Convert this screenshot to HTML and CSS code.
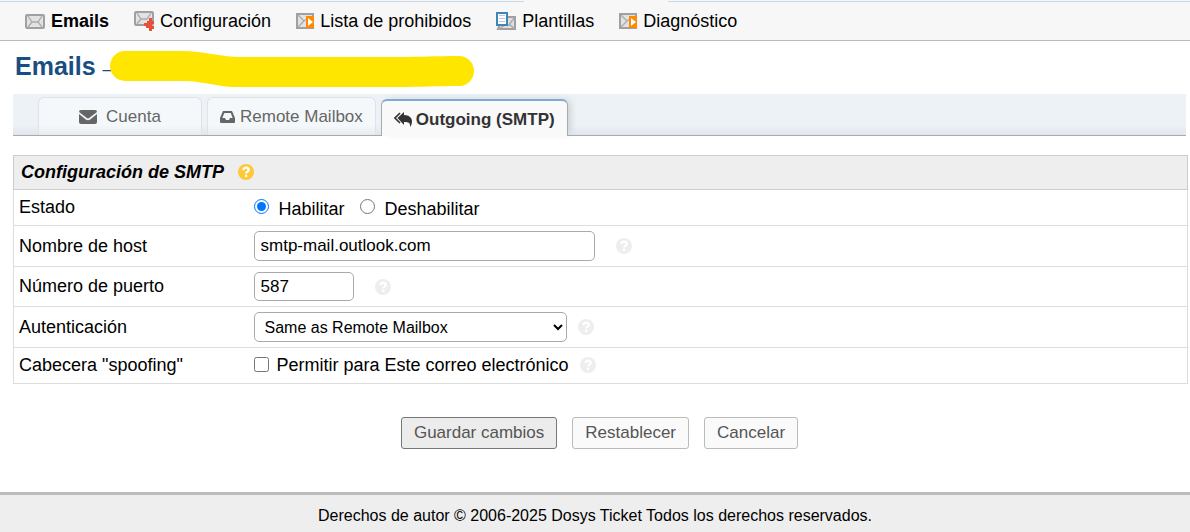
FILE: index.html
```html
<!DOCTYPE html>
<html lang="es">

<head>
    <meta charset="UTF-8">
    <meta name="viewport" content="width=device-width, initial-scale=1.0">
    <title>Emails</title>
    <link rel="stylesheet" href="styles.css">
</head>

<body>
    <!-- shared icons -->
    <svg class="sprite" aria-hidden="true">
        <symbol id="mail" viewBox="0 0 20 15">
            <rect x="1" y="1" width="18" height="13" rx="1" fill="#e2e2e2" stroke="#a0a0a0" stroke-width="2" />
            <path d="M3 2l4 6h6l4-6M3 13l4-5M17 13l-4-5" fill="none" stroke="#aaa" stroke-width="1.300" />
        </symbol>
        <symbol id="mail-go" viewBox="0 0 18 16">
            <rect x="1" y="1" width="16" height="14" fill="#e2e2e2" stroke="#a0a0a0" stroke-width="2" />
            <path d="M2 2l6 6 3-2M2 14l6-6" fill="none" stroke="#aaa" stroke-width="1.300" />
            <path d="M10 3h8v12h-8z" fill="#ff8a00" />
            <path d="M12 5l5 4-5 4z" fill="#fff" />
        </symbol>
        <symbol id="help" viewBox="0 0 16 16">
            <circle cx="8" cy="8" r="8" fill="currentColor" />
            <path d="M5.5 6.2C5.6 2.8 10.700 3 10.700 5.900C10.700 7.700 8.100 7.500 8.100 9.600" fill="none" stroke="#fff" stroke-width="2.300" />
            <path d="M7 10.700h2.300v2.300H7z" fill="#fff" />
        </symbol>
    </svg>

    <nav>
        <div class="topline"><span></span></div>
        <ul class="subnav">
            <li><a class="active" href="#"><svg width="20" height="15"><use href="#mail" /></svg>Emails</a></li>
            <li><a href="#"><svg width="20" height="20" viewBox="0 0 20 20">
                        <rect x="1" y="1" width="18" height="13" rx="1" fill="#e2e2e2" stroke="#a0a0a0" stroke-width="2" />
                        <path d="M3 2l4 6h6l4-6M3 13l4-5" fill="none" stroke="#aaa" stroke-width="1.300" />
                        <path d="M15 7h3v3h2v3h-2v2h2v3h-2v2h-3v-3h-3v-2h-2v-3h3v-2h2z" fill="#e8503c" />
                    </svg>Configuración</a></li>
            <li><a href="#"><svg width="18" height="16"><use href="#mail-go" /></svg>Lista de prohibidos</a></li>
            <li><a href="#"><svg width="20" height="18" viewBox="0 0 20 18">
                        <path d="M10 5h9v12H2l2-5z" fill="#dedede" stroke="#a0a0a0" stroke-width="2" />
                        <path d="M3 17l6-4h5l5 4M13 13l5-7" fill="none" stroke="#aaa" stroke-width="1.300" />
                        <path d="M1 1h10v12H1z" fill="#fff" stroke="#3d86bb" stroke-width="2" />
                        <path d="M3 3.500h6M3 6.500h6M3 9.500h6" stroke="#c3c9ce" />
                    </svg>Plantillas</a></li>
            <li><a href="#"><svg width="18" height="16"><use href="#mail-go" /></svg>Diagnóstico</a></li>
        </ul>
    </nav>

    <main>
        <h1>Emails <small>–</small>
            <svg class="marker" width="364" height="37" viewBox="0 0 364 37" aria-hidden="true">
                <path d="M15 0H72C95 0 110 6 130 6H290C310 6 325 5 348 5A15 15 0 0 1 350 35C325 35 310 36 290 36H126C106 36 95 30 72 30H15A15 15 0 0 1 15 0Z" fill="#ffe600" />
            </svg>
        </h1>

        <ul class="tabs">
            <li class="cuenta"><a href="#"><svg width="18" height="14" viewBox="0 0 18 14">
                        <path d="M0 2Q0 0 2 0h14q2 0 2 2L10.500 7.800Q9 9 7.500 7.800L0 2z M0 4l6.800 5.400q2.200 1.600 4.400 0L18 4v8q0 2-2 2H2q-2 0-2-2z" fill="currentColor" />
                    </svg>Cuenta</a></li>
            <li><a href="#"><svg width="15" height="12" viewBox="0 0 15 12">
                        <path d="M3 0h9l3 7v4q0 1-1 1H1q-1 0-1-1V7zM4.300 2L2.300 7H5l1 2h3l1-2h2.700l-2-5z" fill="currentColor" fill-rule="evenodd" />
                    </svg>Remote Mailbox</a></li>
            <li class="active"><a href="#"><svg width="18" height="15" viewBox="0 0 18 15">
                        <path d="M10 0v3c5 0 8 3 8 6 0 3-1 5-2 6 .500-4-1-5-6-5v3L3.500 6z" fill="currentColor" />
                        <path d="M6 1L1 6l5 5" fill="none" stroke="currentColor" stroke-width="1.600" />
                    </svg>Outgoing (SMTP)</a></li>
        </ul>

        <form>
            <table>
                <thead>
                    <tr>
                        <th colspan="2"><em>Configuración de SMTP</em><svg class="help warn" width="16" height="16"><use href="#help" /></svg></th>
                    </tr>
                </thead>
                <tbody>
                    <tr class="short">
                        <td>Estado</td>
                        <td>
                            <div class="field">
                                <label class="radio"><input type="radio" name="smtp_active" checked><span>Habilitar</span></label>
                                <label class="radio"><input type="radio" name="smtp_active"><span>Deshabilitar</span></label>
                            </div>
                        </td>
                    </tr>
                    <tr>
                        <td><label for="host">Nombre de host</label></td>
                        <td>
                            <div class="field"><input type="text" id="host" value="smtp-mail.outlook.com"><svg class="help far" width="16" height="16"><use href="#help" /></svg></div>
                        </td>
                    </tr>
                    <tr>
                        <td><label for="port">Número de puerto</label></td>
                        <td>
                            <div class="field"><input type="text" id="port" value="587"><svg class="help far" width="16" height="16"><use href="#help" /></svg></div>
                        </td>
                    </tr>
                    <tr>
                        <td><label for="auth">Autenticación</label></td>
                        <td>
                            <div class="field"><select id="auth">
                                    <option>Same as Remote Mailbox</option>
                                </select><svg class="help" width="16" height="16"><use href="#help" /></svg></div>
                        </td>
                    </tr>
                    <tr class="short">
                        <td>Cabecera "spoofing"</td>
                        <td>
                            <div class="field"><label class="check"><input type="checkbox">Permitir para Este correo electrónico</label><svg class="help" width="16" height="16"><use href="#help" /></svg></div>
                        </td>
                    </tr>
                </tbody>
            </table>
            <div class="buttons">
                <button type="submit" class="save">Guardar cambios</button>
                <button type="reset">Restablecer</button>
                <button type="button">Cancelar</button>
            </div>
        </form>
    </main>

    <footer>Derechos de autor © 2006-2025 Dosys Ticket Todos los derechos reservados.</footer>
</body>

</html>
```

FILE: styles.css
```css
* {
    box-sizing: border-box;
}

body {
    margin: 0;
    min-height: 100vh;
    display: flex;
    flex-direction: column;
    background: #fff;
    color: #000;
    font-family: "Liberation Sans", Arial, sans-serif;
    font-size: 18px;
    line-height: 20px;
}

a {
    color: inherit;
    text-decoration: none;
}

ul {
    margin: 0;
    padding: 0;
    list-style: none;
}

svg {
    flex: none;
}

.sprite {
    position: absolute;
    width: 0;
    height: 0;
}

/* navigation */
nav {
    background: #f7f7f7;
    border-bottom: 1px solid #bbb;
}

.topline {
    height: 2px;
    border-bottom: 1px solid #c5d9e8;
    padding-left: 44%;
}

.topline span {
    display: block;
    width: 144px;
    height: 2px;
    background: #f7f7f7;
}

.subnav {
    display: flex;
    gap: 25px;
    height: 38px;
    padding-left: 25px;
}

.subnav a {
    display: flex;
    align-items: center;
    gap: 6px;
    height: 100%;
}

.subnav .active {
    font-weight: bold;
}

main {
    padding: 0 2px 0 13px;
}

h1 {
    position: relative;
    margin: 0;
    padding: 10px 2px 0;
    height: 53px;
    font-size: 25px;
    line-height: 30px;
    color: #184e81;
}

h1 small {
    font-size: 18px;
    font-weight: normal;
}

.marker {
    position: absolute;
    left: 97px;
    top: 10px;
}

/* tabs */
.tabs {
    display: flex;
    align-items: flex-end;
    gap: 5px;
    height: 42px;
    margin-right: 2px;
    padding-left: 25px;
    border-bottom: 1px solid #aaa;
    background: linear-gradient(#ecf2f6 75%, #e0e6eb);
    font-size: 17px;
}

.tabs a {
    display: flex;
    align-items: center;
    justify-content: center;
    gap: 5px;
    height: 38px;
    padding: 0 12px;
    border: 1px solid #dfe3e8;
    border-bottom: 0;
    border-radius: 6px 6px 0 0;
    background: linear-gradient(#f4f8fb 75%, #e6ebf0);
    color: #666;
}

.tabs .cuenta a {
    width: 164px;
    gap: 9px;
}

.tabs .active {
    margin-bottom: -1px;
}

.tabs .active a {
    height: 37px;
    gap: 4px;
    padding-top: 2px;
    border: 1px solid #aaa;
    border-top: 2px solid #81a9d7;
    border-bottom: 0;
    background: #f9f9f9;
    box-shadow: 4px -1px 8px -3px rgba(0, 0, 0, 0.2);
    color: #333;
    font-weight: bold;
}

/* settings table */
table {
    width: 100%;
    margin-top: 19px;
    border: 1px solid #ddd;
    border-collapse: collapse;
}

th {
    height: 34px;
    padding: 0 7px 2px;
    border: 1px solid #ccc;
    background: #eee;
    text-align: left;
}

td {
    padding: 5px;
    border-bottom: 1px solid #ddd;
}

td:first-child {
    width: 235px;
    padding-bottom: 6px;
}

.short td,
.short td:first-child {
    height: 36px;
    padding-top: 0;
    padding-bottom: 2px;
}

.field {
    display: flex;
    align-items: center;
}

.help {
    margin-left: 11px;
    color: #eee;
}

.help.far {
    margin-left: 21px;
}

.help.warn {
    margin-left: 14px;
    color: #fdc938;
    vertical-align: -2px;
}

input[type="text"],
select {
    height: 30px;
    border: 1px solid #aaa;
    border-radius: 5px;
    background: #fff;
    color: #000;
    font-family: inherit;
    font-size: 17px;
}

input[type="text"] {
    padding: 0 6px;
}

#host {
    width: 341px;
}

#port {
    width: 100px;
    height: 29px;
}

select {
    width: 313px;
    padding: 0 6px;
    font-size: 16px;
}

input[type="radio"],
input[type="checkbox"] {
    width: 15px;
    height: 15px;
    margin: 0;
}

.radio {
    display: flex;
    align-items: center;
    margin-right: 15px;
}

.radio span {
    padding: 4px 0 0 10px;
}

.check {
    display: flex;
    align-items: center;
    gap: 8px;
}

.buttons {
    display: flex;
    justify-content: center;
    gap: 15px;
    margin: 33px 0 43px;
    padding-right: 2px;
}

button {
    height: 32px;
    padding: 0 12px;
    border: 1px solid #bbb;
    border-radius: 3px;
    background: #fafafa;
    color: #555;
    font-family: inherit;
    font-size: 17px;
}

button.save {
    border-color: #777;
    background: #ececec;
}

footer {
    flex: 1;
    padding: 11px 0 6px;
    border-top: 3px solid #bbb;
    background: #eee;
    font-size: 16px;
    text-align: center;
}
```
